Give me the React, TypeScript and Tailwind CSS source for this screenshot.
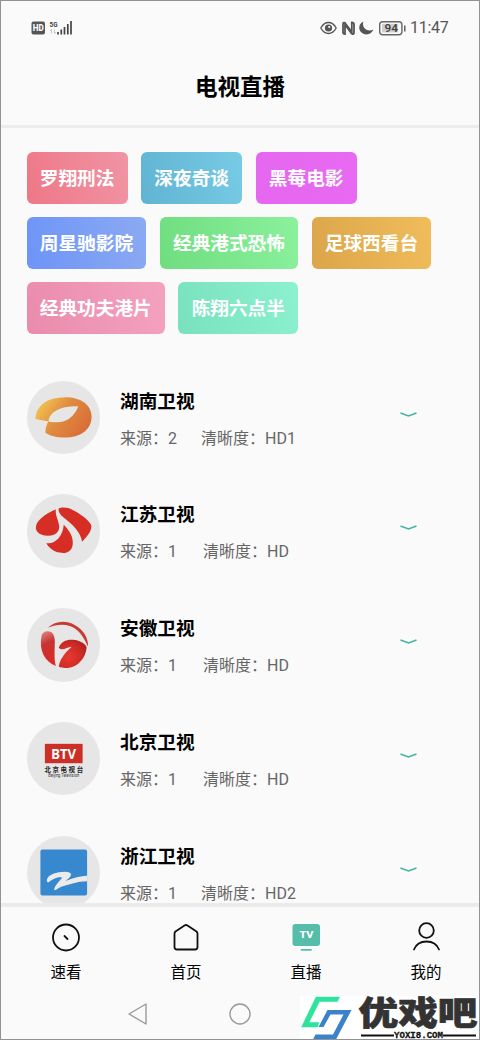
import type { ReactNode } from 'react';

const tags = [
  { name: '罗翔刑法', color: 'from-[#ee7787] to-[#f094a4]' },
  { name: '深夜奇谈', color: 'from-[#60b4d2] to-[#78cbe5]' },
  { name: '黑莓电影', color: 'from-[#e567f0] to-[#e86af3]' },
  { name: '周星驰影院', color: 'from-[#6d94f7] to-[#8caaf3]' },
  { name: '经典港式恐怖', color: 'from-[#6edd7f] to-[#8bf19d]' },
  { name: '足球西看台', color: 'from-[#dba54a] to-[#f1bd5b]' },
  { name: '经典功夫港片', color: 'from-[#ea8bac] to-[#f4a2c0]' },
  { name: '陈翔六点半', color: 'from-[#7ae1be] to-[#8bf1cf]' },
];

function HunanLogo() {
  return (
    <svg viewBox="0 0 74 74" className="w-full h-full">
      <defs>
        <linearGradient id="hunan" x1="0" y1="0.2" x2="1" y2="0.7">
          <stop offset="0" stopColor="#f3c953" />
          <stop offset="0.45" stopColor="#e08c40" />
          <stop offset="1" stopColor="#d96b36" />
        </linearGradient>
      </defs>
      <path
        d="M8.5 38C9 25 20 16.500 37 16.500C54 16 65 24 65 36C65 49 54 57 38 57C30 57 23 55 18.500 52C18.500 48 19.500 44 21.500 40.500C17 40 12 39 8.500 38ZM21.500 40.500C25 42 32 42 37 40.500C44 38.500 49.500 32 51.500 25.500C42 24.500 31 27.500 26 32C23.500 34.500 22 37 21.500 40.500Z"
        fill="url(#hunan)"
        fillRule="evenodd"
      />
    </svg>
  );
}

function JiangsuLogo() {
  return (
    <svg viewBox="0 0 74 74" className="w-full h-full" fill="#d62e24">
      <path d="M29 15.500C22 18 13 24 10 29.500C6.500 37 12 42 21 42C31 42 33.500 36 32 30C31 25 28.500 21 29 15.500Z" />
      <path d="M32 14.500C35 13 41 13 46 16C54 20 62 26 64.500 31C66 37 60 43 55.500 48C54 38 45 30 36 23C33 20.500 31 17 32 14.500Z" />
      <path d="M37 31C43 37 47 44 46 51C45 58 39 60.500 33 59C27 58 22 54 19.500 49.500C28 51 36 43 37 31Z" />
    </svg>
  );
}

function AnhuiLogo() {
  return (
    <svg viewBox="0 0 74 74" className="w-full h-full">
      <defs>
        <linearGradient id="anhui" x1="0" y1="0" x2="0.2" y2="1">
          <stop offset="0" stopColor="#e48b87" />
          <stop offset="0.4" stopColor="#c63434" />
          <stop offset="1" stopColor="#dc2b24" />
        </linearGradient>
        <radialGradient id="anhuiEar" cx="0.35" cy="0.6" r="0.75">
          <stop offset="0" stopColor="#e63a30" />
          <stop offset="0.6" stopColor="#cf2b25" />
          <stop offset="1" stopColor="#a82020" />
        </radialGradient>
      </defs>
      <path d="M21 20C28 13 39 12 48 17C57 21.500 62 31 61.500 39C57 29 52 21 43 18C36 16 28 17 21 20Z" fill="#c83a34" />
      <path d="M14.500 29C15 25 18 23.500 21 23.500C26 23.500 28 28 28 34C28 43 27 50 29 58.500C18 54 12 43 14.500 29Z" fill="url(#anhui)" />
      <path d="M32 40C34 34 40 31.500 46 32C54 32.500 60 37 60 40C59 50 52 59 41 60.500C37 60.500 33 60 32 59C33 53 36 47 45 39C40 39 36 44 32 40Z" fill="url(#anhuiEar)" />
    </svg>
  );
}

function BeijingLogo() {
  return (
    <svg viewBox="0 0 74 74" className="w-full h-full">
      <rect x="18" y="22" width="38" height="19.500" fill="#cd2f27" />
      <text x="24.500" y="37.200" fontSize="15" fontWeight="700" fill="#fff" textLength="25" lengthAdjust="spacingAndGlyphs" className="font-['Noto_Sans',sans-serif]">BTV</text>
      <text x="17.500" y="50.300" fontSize="6.500" fontWeight="700" fill="#222" textLength="39" className="font-['Noto_Sans_CJK_SC',sans-serif]">北京电视台</text>
      <text x="21.500" y="55.500" fontSize="4.500" fill="#333" textLength="31" lengthAdjust="spacingAndGlyphs" className="font-[Roboto,sans-serif]">Beijing Television</text>
    </svg>
  );
}

function ZhejiangLogo() {
  return (
    <svg viewBox="0 0 74 74" className="w-full h-full">
      <rect x="13.500" y="13.500" width="47" height="46.500" rx="2" fill="#3888cf" />
      <path
        d="M20 44C21 39 30 36 38 36C45 36 46 39 42 42.500L38.500 45.500C44 43 52 40.500 60.500 40V45.500C50 45.500 43 49 36 50.500C32 51.500 30 54.500 27.500 54.500C27 51 32 46 35.500 42C31 40.500 25 44 22 46.500C20.500 47 19.800 46 20 44Z"
        fill="#ebebeb"
      />
    </svg>
  );
}

const channels: { name: string; source: string; quality: string; gap: string; logo: ReactNode }[] = [
  { name: '湖南卫视', source: '2', quality: 'HD1', gap: 'ml-[24px]', logo: <HunanLogo /> },
  { name: '江苏卫视', source: '1', quality: 'HD', gap: 'ml-[26px]', logo: <JiangsuLogo /> },
  { name: '安徽卫视', source: '1', quality: 'HD', gap: 'ml-[26px]', logo: <AnhuiLogo /> },
  { name: '北京卫视', source: '1', quality: 'HD', gap: 'ml-[26px]', logo: <BeijingLogo /> },
  { name: '浙江卫视', source: '1', quality: 'HD2', gap: 'ml-[24px]', logo: <ZhejiangLogo /> },
];

function StatusBar() {
  return (
    <div className="flex h-[53px] shrink-0 items-center justify-between pl-[30px] pr-[31px] text-[#555]">
      <svg width="44" height="18" viewBox="0 0 44 18">
        <rect x="0.500" y="2.500" width="13.500" height="13" rx="2" fill="#555" />
        <text x="1.700" y="12" fontSize="8.500" fontWeight="800" fill="#fff" textLength="11" lengthAdjust="spacingAndGlyphs" className="font-[Roboto,sans-serif]">HD</text>
        <text x="18.500" y="7.800" fontSize="8" fontWeight="700" fill="#444" textLength="8" lengthAdjust="spacingAndGlyphs" className="font-[Roboto,sans-serif]">5G</text>
        <path d="M20.500 14.500V10.500l-1.500 1.500M23.500 10.500v4l1.500-1.500" fill="none" stroke="#bbb" strokeWidth="0.800" />
        <path d="M27 13V15.500M30.300 10.500V15.500M33.500 8V15.500M36.800 5V15.500M40 2V15.500" stroke="#444" strokeWidth="1.700" />
      </svg>
      <div className="flex items-center">
        <svg width="86" height="18" viewBox="0 0 86 18">
          <path d="M0.800 9C3 5 5.500 3.500 8.500 3.500S14 5 16.200 9C14 13 11.500 14.500 8.500 14.500S3 13 0.800 9Z" fill="none" stroke="#555" strokeWidth="1.300" />
          <circle cx="8.500" cy="9" r="3.600" fill="#555" />
          <circle cx="9.200" cy="8" r="1.100" fill="#fff" />
          <path d="M24.500 3.500Q23 3.500 23 5V13Q23 15 25 15V5.500L32 15.200M24.500 3.200L31.800 13V3.500Q34 3.500 34 5.500V13.500Q34 15.200 32 15.200" fill="none" stroke="#555" strokeWidth="1.800" />
          <path d="M43.500 2.500C38.500 4.500 38 10.500 41.500 13.500C45.500 17 51.500 15.500 53.500 10.500C50 12.500 46 11.500 44 8.500C42.800 6.500 42.700 4.500 43.500 2.500Z" fill="#555" />
          <rect x="59.700" y="2.700" width="22.200" height="13" rx="3" fill="none" stroke="#666" strokeWidth="1.400" />
          <rect x="62" y="4.800" width="16" height="8.800" rx="0.500" fill="#cfcfcf" />
          <path d="M84.800 6.500v6" stroke="#555" strokeWidth="1.400" />
          <text x="64.500" y="13" fontSize="11" fontWeight="600" fill="#444" textLength="13.500" lengthAdjust="spacingAndGlyphs" className="font-[Roboto,sans-serif]">94</text>
        </svg>
        <span className="ml-[4px] w-[38px] text-[16px] leading-none tracking-[-0.25px] whitespace-nowrap">11:47</span>
      </div>
    </div>
  );
}

function NavItem({ label, children }: { label: string; children: ReactNode }) {
  return (
    <div className="flex w-[120px] flex-col items-center">
      <svg width="32" height="32" viewBox="0 0 32 32" fill="none" stroke="#111" strokeWidth="1.800" strokeLinecap="round" strokeLinejoin="round">
        {children}
      </svg>
      <span className="mt-[8px] text-[15.500px] leading-[24px] text-black">{label}</span>
    </div>
  );
}

function Watermark() {
  return (
    <div className="absolute right-[-1px] bottom-[-1px] h-[44px] w-[180px] bg-white">
      <svg width="180" height="44" viewBox="0 0 180 44" className="overflow-visible">
        <path d="M16 1H39.500L37.500 5.500H19.500L9 26.500H19L17.500 31H1.500Z" fill="#2ee39b" stroke="#2ee39b" strokeWidth="0.500" />
        <path d="M27.500 14H51.500L36 43.500H13L15.500 38.500H33L43.500 18.500H30.500L23.500 31H18.500Z" fill="#3b82cb" />
        <text x="58.500" y="29" fontSize="33" fontWeight="900" fill="#333" stroke="#333" strokeWidth="0.700" textLength="119" lengthAdjust="spacingAndGlyphs" className="font-['Noto_Sans_CJK_SC',sans-serif]">优戏吧</text>
        <path d="M61 39.500H94M143 39.500H176" stroke="#111" strokeWidth="2" />
        <text x="94" y="42" fontSize="9" fontWeight="700" fill="#111" stroke="#111" strokeWidth="0.300" textLength="49" lengthAdjust="spacingAndGlyphs" className="font-['Liberation_Mono',monospace]">YOXI8.COM</text>
      </svg>
    </div>
  );
}

export default function App() {
  return (
    <div className="relative flex h-[1040px] w-[480px] flex-col overflow-hidden border border-[#929292] bg-[#fafafa] font-[Roboto,'Noto_Sans_CJK_SC',sans-serif]">
      <StatusBar />

      <header className="flex h-[74px] shrink-0 items-center justify-center border-b-[3px] border-[#ececec] pb-[4px]">
        <h1 className="text-[22.500px] font-bold text-black">电视直播</h1>
      </header>

      <main className="min-h-0 flex-1 overflow-hidden pl-[25.500px]">
        <div className="flex flex-wrap gap-x-[13.300px] gap-y-[13.300px] pt-[23.500px]">
          {tags.map((tag) => (
            <span
              key={tag.name}
              className={`flex h-[52px] items-center rounded-[6px] bg-linear-75 px-[13.300px] pt-[2px] text-[18.670px] font-bold whitespace-nowrap text-white ${tag.color}`}
            >
              {tag.name}
            </span>
          ))}
        </div>

        <div className="mt-[46.500px] flex flex-col gap-[40px]">
          {channels.map((channel) => (
            <div key={channel.name} className="flex h-[73.800px] shrink-0">
              <div className="h-[73.500px] w-[73.500px] shrink-0 overflow-hidden rounded-full bg-[#e6e6e6]">{channel.logo}</div>
              <div className="ml-[20px] w-[279px] pt-[7px]">
                <h2 className="text-[18.670px] leading-[28px] font-bold text-black">{channel.name}</h2>
                <p className="mt-[11px] flex text-[16px] leading-[24px] whitespace-nowrap text-[#666]">
                  <span>来源：{channel.source}</span>
                  <span className={channel.gap}>清晰度：{channel.quality}</span>
                </p>
              </div>
              <svg className="mt-[30px]" width="20" height="8" viewBox="0 0 20 8" fill="none">
                <path d="M1.500 2L9.500 5L17.500 2" stroke="#43b49d" strokeWidth="1.600" />
              </svg>
            </div>
          ))}
        </div>
      </main>

      <nav className="flex h-[85px] shrink-0 border-t-[4px] border-[#ebebeb] pt-[14px]">
        <div className="ml-[5px] flex shrink-0">
          <NavItem label="速看">
            <circle cx="16" cy="16.500" r="13" />
            <path d="M14.500 15l3 3" />
          </NavItem>
          <NavItem label="首页">
            <path d="M4.500 12.500Q4.500 11.500 5.500 10.500L14.500 4.500Q16 3.500 17.500 4.500L26.500 10.500Q27.500 11.500 27.500 12.500V26Q27.500 28.500 25 28.500H7Q4.500 28.500 4.500 26Z" />
          </NavItem>
          <NavItem label="直播">
            <rect x="2.500" y="3" width="27.500" height="22" rx="3" fill="#55bda9" stroke="none" />
            <path d="M11.500 28.800h9.500" stroke="#55bda9" />
            <text x="9.500" y="17.300" fontSize="9.500" fontWeight="800" fill="#fff" stroke="none" textLength="14" lengthAdjust="spacingAndGlyphs" className="font-[Roboto,sans-serif]">TV</text>
          </NavItem>
          <NavItem label="我的">
            <circle cx="16.500" cy="9.500" r="7.300" />
            <path d="M4 28.500C6 23.500 11 20.500 16.500 20.500S27 23.500 29 28.500" />
          </NavItem>
        </div>
      </nav>

      <div className="flex h-[51px] shrink-0 items-center pl-[125px]">
        <svg width="22" height="24" viewBox="0 0 22 24" fill="none" stroke="#999" strokeWidth="1.400" strokeLinejoin="round">
          <path d="M3 12L20 2V22Z" />
        </svg>
        <svg className="ml-[80px]" width="24" height="24" viewBox="0 0 24 24" fill="none" stroke="#999" strokeWidth="1.400">
          <circle cx="12" cy="12" r="10" />
        </svg>
      </div>

      <Watermark />
    </div>
  );
}
